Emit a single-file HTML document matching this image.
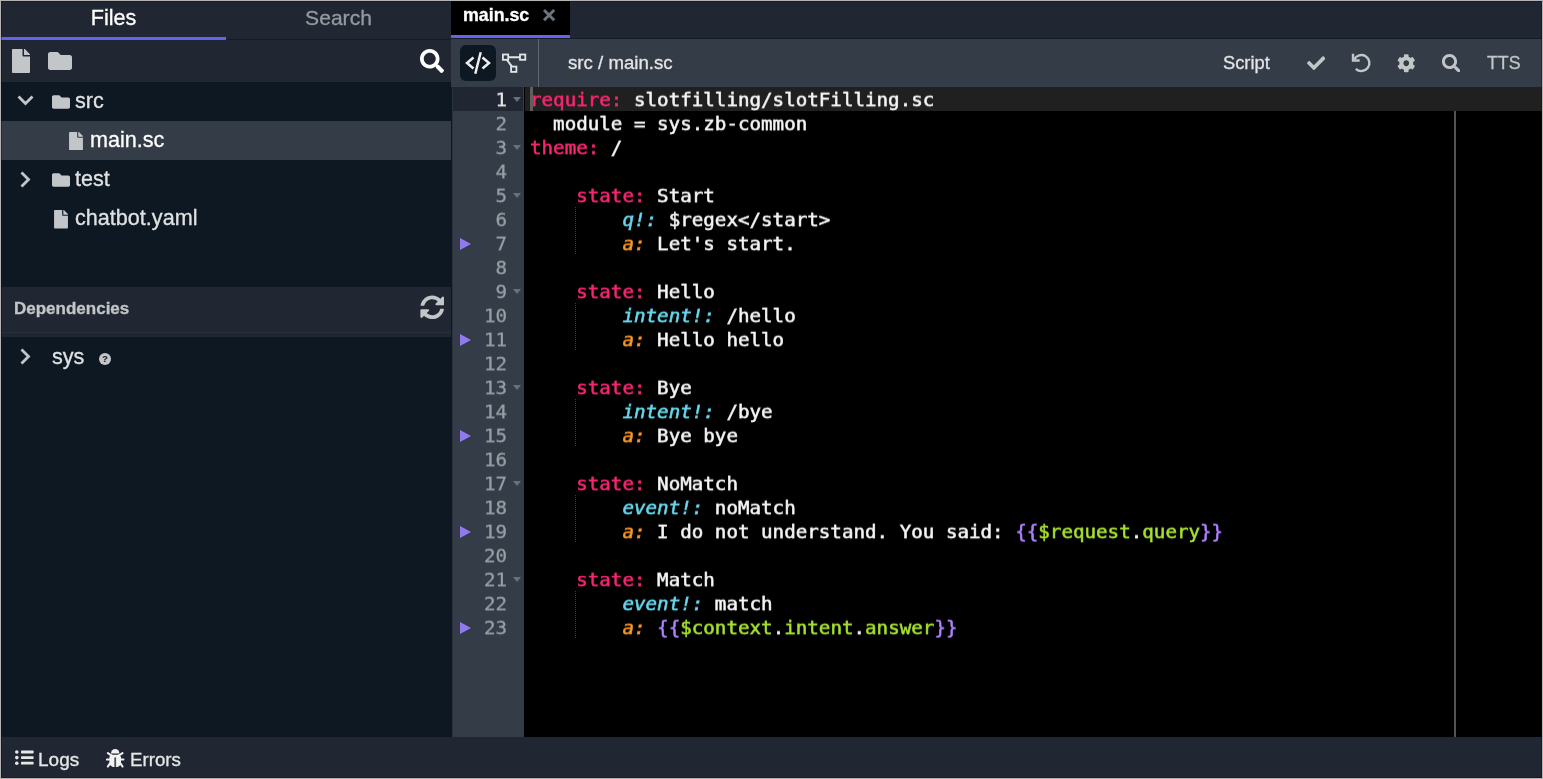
<!DOCTYPE html>
<html lang="en">
<head>
<meta charset="utf-8">
<title>main.sc - Editor</title>
<style>
*{box-sizing:border-box;margin:0;padding:0}
html,body{width:1543px;height:779px;overflow:hidden;background:#b4b3b1}
body{font-family:"Liberation Sans",sans-serif;color:#c3c6c9;position:relative}
#app{position:absolute;left:1px;top:1px;width:1541px;height:777px;background:#0d1822;overflow:hidden}
.abs{position:absolute}
#inb{position:absolute;left:0;top:0;width:1541px;height:777px;border:1px solid rgba(8,16,26,0.4);pointer-events:none}
.ltab,.row span,#deps b,#bottom span,#etab b,#etool .t{will-change:transform;-webkit-text-stroke:0.3px}
/* left panel */
#left{position:absolute;left:0;top:0;width:450px;height:736px;background:#0d1822}
#ltabs{position:absolute;left:0;top:0;width:450px;height:39px;background:#202732;border-bottom:1px solid #151c26}
.ltab{position:absolute;top:0;height:39px;width:225px;text-align:center;font-size:21.6px;line-height:33px;color:#959aa0}
.ltab.on{color:#fff;border-bottom:3px solid #6563eb}
#ltool{position:absolute;left:0;top:39px;width:450px;height:42px;background:#202732}
.row{position:absolute;left:0;width:450px;height:39px;font-size:21.6px;line-height:37px;color:#dfe1e3;white-space:nowrap}
.row.sel{background:#343c47;color:#fff}
.row span{position:absolute;top:0}
#deps{position:absolute;left:0;top:286px;width:450px;height:50px;background:#202732}
#deps i{position:absolute;left:0;top:45px;width:450px;height:1px;background:#27313a}
#deps b{position:absolute;left:13px;top:0;line-height:44px;font-size:17px;color:#c3c6c9;font-weight:bold}
/* bottom */
#bottom{position:absolute;left:0;top:736px;width:1541px;height:41px;background:#202732}
#bottom span{position:absolute;top:0;line-height:45px;font-size:18.3px;color:#e6e7e9}
/* editor */
#etabs{position:absolute;left:450px;top:0;width:1091px;height:38px;background:#202732;border-bottom:1px solid #151c26}
#etab{position:absolute;left:0;top:0;width:119px;height:37px;background:#000;border-bottom:3px solid #6563eb}
#etab b{position:absolute;left:11.6px;top:0;line-height:29px;font-size:17.8px;color:#fff;font-weight:bold}
#etool{position:absolute;left:450px;top:38px;width:1091px;height:48px;background:#343c47}
#etool .t{position:absolute;top:0;line-height:48px;font-size:18.3px;color:#e4e5e7;white-space:nowrap}
#codebtn{position:absolute;left:9px;top:6px;width:36px;height:36px;border-radius:6px;background:#0d1822}
#vsep{position:absolute;left:87px;top:0;width:1px;height:48px;background:#5f6772}
#ed{position:absolute;left:452px;top:86px;width:1089px;height:650px;background:#000;overflow:hidden}
#gutter{position:absolute;left:0;top:0;width:71.2px;height:650px;background:#343c47}
#lines{position:absolute;left:0;top:0;width:72px;height:650px}
#nums{position:absolute;left:0;top:0;width:72px;transform:scaleY(0.96);transform-origin:0 0;-webkit-text-stroke:0.3px;will-change:transform}
#actg{position:absolute;left:0;top:0;width:70px;height:24px;background:#202732}
#actl{position:absolute;left:72px;top:0;width:1017px;height:24px;background:#202020}
#cursor{position:absolute;left:77px;top:0;width:2.5px;height:24px;background:#5f5f5b}
#pm{position:absolute;left:1001px;top:24px;width:2px;height:626px;background:#53544f}
.ln{position:absolute;left:0;width:54px;text-align:right;height:25px;line-height:25px;padding-top:1px;font-family:"DejaVu Sans Mono","Liberation Mono",monospace;font-size:19.2px;color:#9a9fa6}
.ln.a{color:#e8e8e8}
.fold{position:absolute;left:60px;width:0;height:0;border-left:4px solid transparent;border-right:4px solid transparent;border-top:5px solid #68707b}
.bp{position:absolute;left:7px;width:0;height:0;margin-top:0.5px;border-top:6.5px solid transparent;border-bottom:6.5px solid transparent;border-left:11px solid #8f7af2}
pre{position:absolute;left:77px;top:0;transform:scaleY(0.96);transform-origin:0 0;padding-top:1px;font-family:"DejaVu Sans Mono","Liberation Mono",monospace;font-size:19.2px;line-height:25px;color:#f5f5f5;white-space:pre;-webkit-text-stroke:0.55px;will-change:transform}
.k{color:#f92672}
.c{color:#66d9ef;font-style:italic}
.o{color:#fd971f;font-style:italic}
.p{color:#ae81ff}
.g{color:#a6e22e}
.ig{position:absolute;width:1px;background:repeating-linear-gradient(to bottom,#403e32 0,#403e32 1px,transparent 1px,transparent 2px)}
</style>
</head>
<body>
<div id="app">
 <div id="left">
  <div id="ltabs">
   <div class="ltab on" style="left:0">Files</div>
   <div class="ltab" style="left:225px;font-size:21.1px">Search</div>
  </div>
  <div id="ltool"></div>
  <div class="row" style="top:81px"><span style="left:74px">src</span></div>
  <div class="row sel" style="top:120px"><span style="left:89px">main.sc</span></div>
  <div class="row" style="top:159px"><span style="left:74px">test</span></div>
  <div class="row" style="top:198px"><span style="left:74px">chatbot.yaml</span></div>
  <div id="deps"><b>Dependencies</b><i></i></div>
  <div class="row" style="top:337px"><span style="left:51px">sys</span></div>
<svg class="abs" style="left:11px;top:48px" width="18" height="24" viewBox="0 0 384 512" ><path fill="#c3c6c9" d="M224 136V0H24C10.7 0 0 10.7 0 24v464c0 13.3 10.7 24 24 24h336c13.3 0 24-10.7 24-24V160H248c-13.2 0-24-10.8-24-24zm160-14.1v6.1H256V0h6.1c6.4 0 12.5 2.5 17 7l97.9 98c4.500 4.500 7 10.600 7 16.900z"/></svg>
<svg class="abs" style="left:47px;top:48px" width="24" height="24" viewBox="0 0 512 512" ><path fill="#c3c6c9" d="M464 128H272l-64-64H48C21.49 64 0 85.49 0 112v288c0 26.51 21.49 48 48 48h416c26.51 0 48-21.49 48-48V176c0-26.51-21.49-48-48-48z"/></svg>
<svg class="abs" style="left:419px;top:48px" width="24" height="24" viewBox="0 0 512 512" ><path fill="#fff" d="M505 442.7L405.3 343c-4.500-4.500-10.600-7-17-7H372c27.600-35.300 44-79.700 44-128C416 93.100 322.900 0 208 0S0 93.100 0 208s93.100 208 208 208c48.300 0 92.700-16.400 128-44v16.300c0 6.400 2.500 12.500 7 17l99.700 99.700c9.400 9.400 24.600 9.400 33.900 0l28.300-28.300c9.400-9.400 9.400-24.600.1-34zM208 336c-70.700 0-128-57.200-128-128 0-70.700 57.200-128 128-128 70.700 0 128 57.200 128 128 0 70.700-57.200 128-128 128z"/></svg>
<svg class="abs" style="left:15.700px;top:94.400px" width="17" height="11" viewBox="0 0 17 11" ><path d="M1.500 1.500L8.500 8.500L15.500 1.500" fill="none" stroke="#c3c6c9" stroke-width="2.800"/></svg>
<svg class="abs" style="left:50.6px;top:92.1px" width="18" height="18" viewBox="0 0 512 512" ><path fill="#c3c6c9" d="M464 128H272l-64-64H48C21.49 64 0 85.49 0 112v288c0 26.51 21.49 48 48 48h416c26.51 0 48-21.49 48-48V176c0-26.51-21.49-48-48-48z"/></svg>
<svg class="abs" style="left:68px;top:130.6px" width="14" height="18.5" viewBox="0 0 384 512" ><path fill="#c3c6c9" d="M224 136V0H24C10.7 0 0 10.7 0 24v464c0 13.3 10.7 24 24 24h336c13.3 0 24-10.7 24-24V160H248c-13.2 0-24-10.8-24-24zm160-14.1v6.1H256V0h6.1c6.4 0 12.5 2.5 17 7l97.9 98c4.500 4.500 7 10.600 7 16.900z"/></svg>
<svg class="abs" style="left:18.500px;top:169.600px" width="11" height="17" viewBox="0 0 11 17" ><path d="M1.500 1.500L8.500 8.500L1.500 15.500" fill="none" stroke="#c3c6c9" stroke-width="2.800"/></svg>
<svg class="abs" style="left:50.6px;top:170.3px" width="18" height="18" viewBox="0 0 512 512" ><path fill="#c3c6c9" d="M464 128H272l-64-64H48C21.49 64 0 85.49 0 112v288c0 26.51 21.49 48 48 48h416c26.51 0 48-21.49 48-48V176c0-26.51-21.49-48-48-48z"/></svg>
<svg class="abs" style="left:53px;top:209.2px" width="14" height="18.5" viewBox="0 0 384 512" ><path fill="#c3c6c9" d="M224 136V0H24C10.7 0 0 10.7 0 24v464c0 13.3 10.7 24 24 24h336c13.3 0 24-10.7 24-24V160H248c-13.2 0-24-10.8-24-24zm160-14.1v6.1H256V0h6.1c6.4 0 12.5 2.5 17 7l97.9 98c4.500 4.500 7 10.600 7 16.900z"/></svg>
<svg class="abs" style="left:418.6px;top:293.6px" width="24.5" height="24.5" viewBox="0 0 512 512" ><path fill="#c3c6c9" d="M370.72 133.28C339.458 104.008 298.888 87.962 255.848 88c-77.458.068-144.328 53.178-162.791 126.850-1.344 5.363-6.122 9.150-11.651 9.150H24.103c-7.498 0-13.194-6.807-11.807-14.176C33.933 94.924 134.813 8 256 8c66.448 0 126.791 26.136 171.315 68.685L463.030 40.970C478.149 25.851 504 36.559 504 57.941V192c0 13.255-10.745 24-24 24H345.941c-21.382 0-32.090-25.851-16.971-40.971l41.750-41.749zM32 296h134.059c21.382 0 32.090 25.851 16.971 40.971l-41.750 41.750c31.262 29.273 71.835 45.319 114.876 45.280 77.418-.070 144.315-53.144 162.787-126.849 1.344-5.363 6.122-9.150 11.651-9.150h57.304c7.498 0 13.194 6.807 11.807 14.176C478.067 417.076 377.187 504 256 504c-66.448 0-126.791-26.136-171.315-68.685L48.970 471.030C33.851 486.149 8 475.441 8 454.059V320c0-13.255 10.745-24 24-24z"/></svg>
<svg class="abs" style="left:18.500px;top:346.500px" width="11" height="17" viewBox="0 0 11 17" ><path d="M1.500 1.500L8.500 8.500L1.500 15.500" fill="none" stroke="#c3c6c9" stroke-width="2.800"/></svg>
<svg class="abs" style="left:98px;top:352px" width="12" height="12" viewBox="0 0 12 12" ><circle cx="6" cy="6" r="6" fill="#c3c6c9"/><text x="6" y="9.400" text-anchor="middle" font-family="Liberation Sans,sans-serif" font-weight="bold" font-size="9.500" fill="#0d1822">?</text></svg>
 </div>
 <div id="etabs"><div id="etab"><b>main.sc</b></div></div>
 <div id="etool">
  <div id="codebtn"></div>
  <div id="vsep"></div>
  <span class="t" style="left:117px;font-size:18.65px">src / main.sc</span>
  <span class="t" style="left:772px">Script</span>
  <span class="t" style="left:1036px;color:#c3c6c9;font-size:17.8px">TTS</span>
 </div>
<svg class="abs" style="left:541px;top:7px" width="15" height="15" viewBox="0 0 15 15" ><path d="M2 2L12.200 12.200M12.200 2L2 12.200" stroke="#6c737d" stroke-width="3" fill="none"/></svg>
<svg class="abs" style="left:459px;top:44px" width="36" height="36" viewBox="0 0 36 36" ><g fill="none" stroke="#eeeeee" stroke-width="2.500"><path d="M13.500 12.500L7 18L13.500 23.500"/><path d="M22.500 12.500L29 18L22.500 23.500"/><path d="M20.700 7.300L15.300 28.700"/></g></svg>
<svg class="abs" style="left:500px;top:51px" width="28" height="24" viewBox="0 0 28 24" ><g fill="none" stroke="#e4e5e6" stroke-width="1.800"><rect x="1.900" y="2.500" width="5.300" height="5.300"/><rect x="19" y="2.500" width="5.300" height="5.300"/><rect x="10.100" y="14.600" width="5.300" height="5.300"/><path d="M7.200 5.200H19M6 8L11 14.600" stroke-width="2"/></g></svg>
<svg class="abs" style="left:1305.600px;top:53.200px" width="18.300" height="18.300" viewBox="0 0 512 512" ><path fill="#c3c6c9" d="M173.898 439.404l-166.400-166.400c-9.997-9.997-9.997-26.206 0-36.204l36.203-36.204c9.997-9.998 26.207-9.998 36.204 0L192 312.690 432.095 72.596c9.997-9.997 26.207-9.997 36.204 0l36.203 36.204c9.997 9.997 9.997 26.206 0 36.204l-294.400 294.401c-9.998 9.997-26.207 9.997-36.204-.001z"/></svg>
<svg class="abs" style="left:1348.600px;top:50.200px" width="24" height="24" viewBox="0 0 24 24" ><g fill="none" stroke="#c3c6c9" stroke-width="2.400"><path d="M3 2.800V9.500H9.700"/><path d="M4.200 8.600A8 8 0 1 1 5.800 17.800"/></g></svg>
<svg class="abs" style="left:1395.5px;top:53px" width="18.5" height="18.5" viewBox="0 0 512 512" ><path fill="#c3c6c9" d="M487.4 315.7l-42.600-24.600c4.300-23.200 4.300-47 0-70.200l42.600-24.600c4.900-2.800 7.100-8.600 5.500-14-11.100-35.600-30-67.800-54.700-94.600-3.800-4.100-10-5.100-14.800-2.300L380.800 110c-17.900-15.400-38.500-27.300-60.800-35.100V25.800c0-5.600-3.900-10.500-9.400-11.700-36.700-8.200-74.300-7.800-109.200 0-5.500 1.200-9.400 6.100-9.400 11.700V75c-22.200 7.900-42.800 19.800-60.800 35.100L88.700 85.500c-4.900-2.800-11-1.900-14.800 2.300-24.700 26.700-43.600 58.900-54.700 94.600-1.700 5.400.6 11.200 5.500 14L67.300 221c-4.300 23.200-4.300 47 0 70.200l-42.600 24.600c-4.900 2.800-7.100 8.600-5.500 14 11.100 35.600 30 67.800 54.700 94.600 3.800 4.100 10 5.100 14.800 2.300l42.600-24.600c17.900 15.400 38.500 27.300 60.800 35.100v49.200c0 5.600 3.900 10.500 9.400 11.700 36.700 8.200 74.300 7.800 109.200 0 5.500-1.200 9.400-6.100 9.400-11.700v-49.200c22.200-7.900 42.800-19.800 60.800-35.100l42.600 24.600c4.900 2.800 11 1.900 14.800-2.300 24.700-26.700 43.600-58.900 54.700-94.600 1.500-5.500-.7-11.300-5.600-14.100zM256 336c-44.100 0-80-35.900-80-80s35.900-80 80-80 80 35.900 80 80-35.900 80-80 80z"/></svg>
<svg class="abs" style="left:1440.7px;top:52.8px" width="18.5" height="18.5" viewBox="0 0 512 512" ><path fill="#c3c6c9" d="M505 442.7L405.3 343c-4.500-4.500-10.600-7-17-7H372c27.600-35.300 44-79.700 44-128C416 93.100 322.900 0 208 0S0 93.100 0 208s93.100 208 208 208c48.300 0 92.700-16.400 128-44v16.300c0 6.400 2.500 12.500 7 17l99.700 99.700c9.400 9.400 24.600 9.400 33.900 0l28.300-28.300c9.400-9.400 9.400-24.600.1-34zM208 336c-70.700 0-128-57.200-128-128 0-70.700 57.200-128 128-128 70.700 0 128 57.200 128 128 0 70.700-57.200 128-128 128z"/></svg>
 <div class="abs" style="left:451px;top:86px;width:1px;height:650px;background:#29323d"></div>
 <div id="ed">
  <div id="gutter"><div id="actg"></div></div>
  <div id="actl"></div>
  <div id="cursor"></div>
  <div id="pm"></div>
  <div id="lines">
<div id="nums">
<div class="ln a" style="top:0px">1</div>
<div class="ln" style="top:25px">2</div>
<div class="ln" style="top:50px">3</div>
<div class="ln" style="top:75px">4</div>
<div class="ln" style="top:100px">5</div>
<div class="ln" style="top:125px">6</div>
<div class="ln" style="top:150px">7</div>
<div class="ln" style="top:175px">8</div>
<div class="ln" style="top:200px">9</div>
<div class="ln" style="top:225px">10</div>
<div class="ln" style="top:250px">11</div>
<div class="ln" style="top:275px">12</div>
<div class="ln" style="top:300px">13</div>
<div class="ln" style="top:325px">14</div>
<div class="ln" style="top:350px">15</div>
<div class="ln" style="top:375px">16</div>
<div class="ln" style="top:400px">17</div>
<div class="ln" style="top:425px">18</div>
<div class="ln" style="top:450px">19</div>
<div class="ln" style="top:475px">20</div>
<div class="ln" style="top:500px">21</div>
<div class="ln" style="top:525px">22</div>
<div class="ln" style="top:550px">23</div>
</div>
<i class="fold" style="top:10px"></i>
<i class="fold" style="top:58px"></i>
<i class="fold" style="top:106px"></i>
<i class="bp" style="top:150px"></i>
<i class="fold" style="top:202px"></i>
<i class="bp" style="top:246px"></i>
<i class="fold" style="top:298px"></i>
<i class="bp" style="top:342px"></i>
<i class="fold" style="top:394px"></i>
<i class="bp" style="top:438px"></i>
<i class="fold" style="top:490px"></i>
<i class="bp" style="top:534px"></i>
<i class="ig" style="left:122px;top:120px;height:48px"></i>
<i class="ig" style="left:122px;top:216px;height:48px"></i>
<i class="ig" style="left:122px;top:312px;height:48px"></i>
<i class="ig" style="left:122px;top:408px;height:48px"></i>
<i class="ig" style="left:122px;top:504px;height:48px"></i>
</div>
<pre><span class="k">require:</span> slotfilling/slotFilling.sc
  module = sys.zb-common
<span class="k">theme:</span> /

    <span class="k">state:</span> Start
        <span class="c">q!:</span> $regex&lt;/start&gt;
        <span class="o">a:</span> Let's start.

    <span class="k">state:</span> Hello
        <span class="c">intent!:</span> /hello
        <span class="o">a:</span> Hello hello

    <span class="k">state:</span> Bye
        <span class="c">intent!:</span> /bye
        <span class="o">a:</span> Bye bye

    <span class="k">state:</span> NoMatch
        <span class="c">event!:</span> noMatch
        <span class="o">a:</span> I do not understand. You said: <span class="p">{{</span><span class="g">$request</span>.<span class="g">query</span><span class="p">}}</span>

    <span class="k">state:</span> Match
        <span class="c">event!:</span> match
        <span class="o">a:</span> <span class="p">{{</span><span class="g">$context</span>.<span class="g">intent</span>.<span class="g">answer</span><span class="p">}}</span></pre>
 </div>
 <div id="bottom">
  <svg class="abs" style="left:13.6px;top:13.3px" width="19" height="15" viewBox="0 0 19 15" ><g fill="#e6e7e9"><circle cx="1.800" cy="2" r="1.800"/><circle cx="1.800" cy="7.600" r="1.800"/><circle cx="1.800" cy="13.200" r="1.800"/><rect x="6" y="0.600" width="12.600" height="2.800" rx="0.700"/><rect x="6" y="6.200" width="12.600" height="2.800" rx="0.700"/><rect x="6" y="11.800" width="12.600" height="2.800" rx="0.700"/></g></svg>
  <svg class="abs" style="left:104.8px;top:11.6px" width="19" height="19" viewBox="0 0 19 19" ><g fill="#f2f3f3"><path d="M5 4.400A4.200 4.300 0 0 1 13.400 4.400Z"/><path d="M5.400 5.800H13L15 7.800V13C15 16 12.800 18 10.200 18H8.200C5.600 18 3.400 16 3.400 13V7.800Z"/><rect x="8.300" y="8.400" width="1.800" height="9.600" fill="#4a4f58"/><path d="M5.400 6.300L1.900 4.200M13 6.300L16.500 4.200M3.400 10.500H1M15 10.500H17.400M3.800 14.600L1.900 17.500M14.600 14.600L16.500 17.500" fill="none" stroke="#f2f3f3" stroke-width="2.100" stroke-linecap="round"/></g></svg>
  <span style="left:37px;font-size:19px">Logs</span>
  <span style="left:129px;font-size:18.7px">Errors</span>
 </div>
<div id="inb"></div>
</div>
</body>
</html>
